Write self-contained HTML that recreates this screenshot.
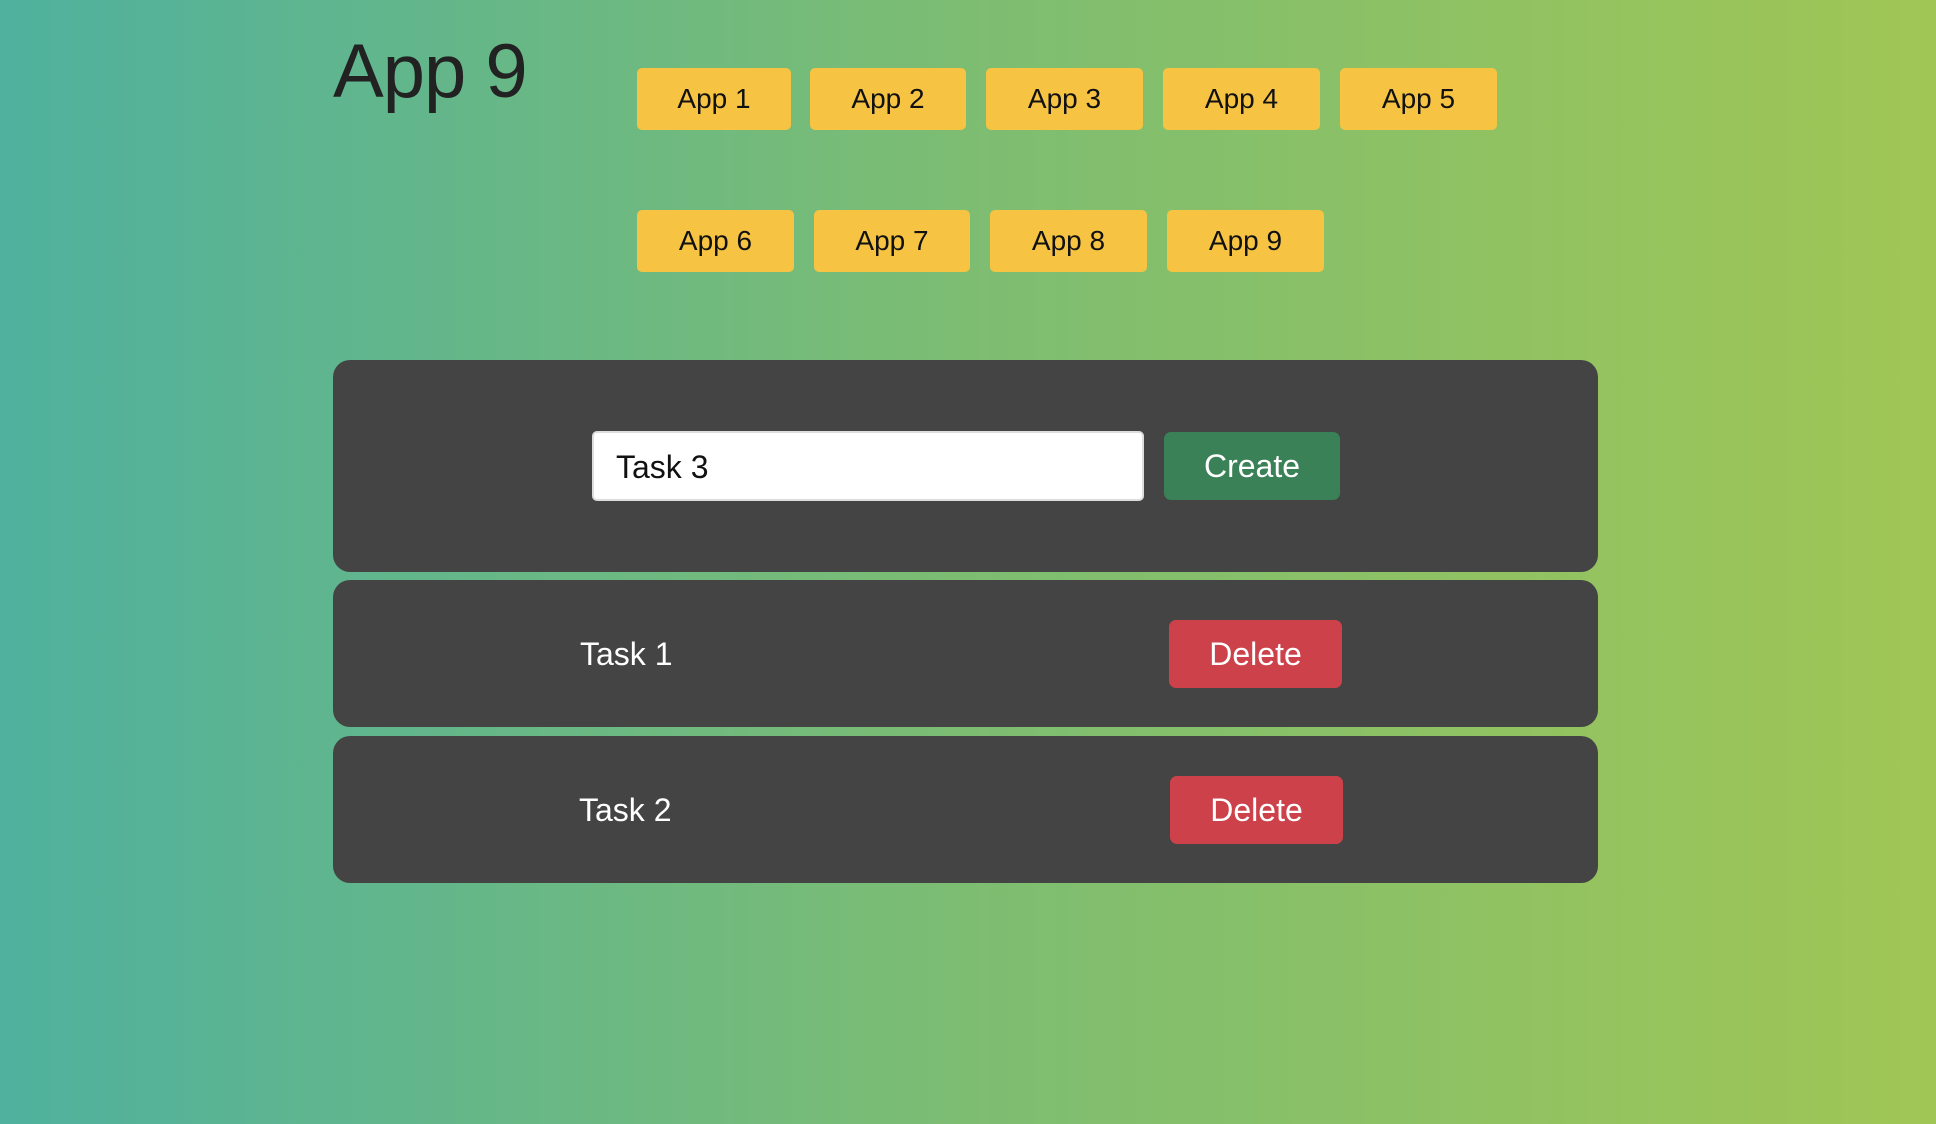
<!DOCTYPE html>
<html><head><style>
*{margin:0;padding:0;box-sizing:border-box}
body{width:1936px;height:1124px;overflow:hidden;background:linear-gradient(90deg,#4fb19e 0%,#7dbd72 50%,#a0c655 100%);font-family:"Liberation Sans",Arial,sans-serif;position:relative}
.a{position:absolute}
h1{position:absolute;left:333px;top:28px;font-size:76px;font-weight:normal;color:#222;letter-spacing:-1px}
.b{position:absolute;height:62px;background:#f6c343;border-radius:5px;color:#111;font-size:28px;display:flex;align-items:center;justify-content:center}
.p{position:absolute;left:333px;width:1265px;background:#444;border-radius:17px}
.t{position:absolute;color:#fff;font-size:32px}
.btn{position:absolute;border-radius:7px;color:#fff;font-size:32px;display:flex;align-items:center;justify-content:center}
</style></head><body>
<h1>App 9</h1>
<div class="b" style="left:637px;top:68px;width:154px">App 1</div>
<div class="b" style="left:810px;top:68px;width:156px">App 2</div>
<div class="b" style="left:986px;top:68px;width:157px">App 3</div>
<div class="b" style="left:1163px;top:68px;width:157px">App 4</div>
<div class="b" style="left:1340px;top:68px;width:157px">App 5</div>
<div class="b" style="left:637px;top:210px;width:157px">App 6</div>
<div class="b" style="left:814px;top:210px;width:156px">App 7</div>
<div class="b" style="left:990px;top:210px;width:157px">App 8</div>
<div class="b" style="left:1167px;top:210px;width:157px">App 9</div>
<div class="p" style="top:360px;height:212px"></div>
<div class="a" style="left:592px;top:431px;width:552px;height:70px;background:#fff;border:2px solid #ddd;border-radius:5px;font-size:32px;color:#111;padding:16px 0 0 22px">Task 3</div>
<div class="btn" style="left:1164px;top:432px;width:176px;height:68px;background:#3a8157">Create</div>
<div class="p" style="top:580px;height:147px"></div>
<div class="t" style="left:580px;top:636px">Task 1</div>
<div class="btn" style="left:1169px;top:620px;width:173px;height:68px;background:#cd414a">Delete</div>
<div class="p" style="top:736px;height:147px"></div>
<div class="t" style="left:579px;top:792px">Task 2</div>
<div class="btn" style="left:1170px;top:776px;width:173px;height:68px;background:#cd414a">Delete</div>
</body></html>
